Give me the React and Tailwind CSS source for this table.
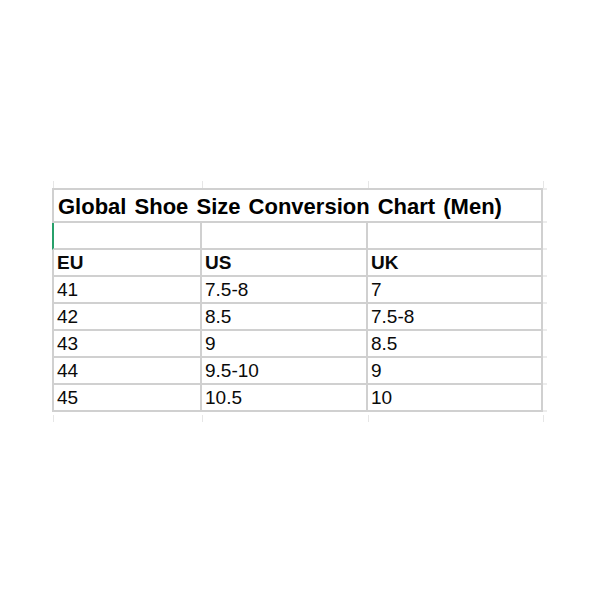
const ROWS = [
  ['EU', 'US', 'UK'],
  ['41', '7.5-8', '7'],
  ['42', '8.5', '7.5-8'],
  ['43', '9', '8.5'],
  ['44', '9.5-10', '9'],
  ['45', '10.5', '10'],
]

const CELL = [
  'w-[150px] border-l-2',
  'w-[166px]',
  'w-[175px]',
]

function Ticks() {
  return (
    <div className="flex h-[7px]">
      {CELL.map((c, i) => (
        <div key={i} className={`${c.replace('border-l-2', i === 0 ? 'border-l' : '')} border-r border-[#e6e6e6] ${i === 0 ? 'ml-[1px] w-[149px]' : ''}`} />
      ))}
    </div>
  )
}

function Row({ cells, bold, first }) {
  return (
    <div className="flex h-[27px]">
      {cells.map((text, i) => (
        <div
          key={i}
          className={`${CELL[i]} border-r-2 border-b-2 border-[#d0d0d0] pl-[3px] leading-[25px] text-[19px] text-[#0a0a0a] ${bold ? 'font-bold' : ''} ${first && i === 0 ? 'border-l-[#27a06a]' : ''}`}
        >
          {text}
        </div>
      ))}
      <div className="w-[4px] border-b-2 border-[#ececec]" />
    </div>
  )
}

export default function App() {
  return (
    <div className="w-[600px] h-[600px] bg-white pt-[181px] pl-[52px] font-['Liberation_Sans',Arial,sans-serif]">
      <Ticks />
      <div className="flex h-[35px]">
        <div className="w-[491px] border-2 border-[#d0d0d0] pl-[4px] pt-px leading-[31px] text-[22px] font-bold text-black whitespace-nowrap [word-spacing:2px]">
          Global Shoe Size Conversion Chart (Men)
        </div>
        <div className="w-[4px] border-t-2 border-b-2 border-[#ececec]" />
      </div>
      <Row cells={['', '', '']} first />
      {ROWS.map((r, i) => (
        <Row key={i} cells={r} bold={i === 0} />
      ))}
      <div className="mt-[3px]">
        <Ticks />
      </div>
    </div>
  )
}
